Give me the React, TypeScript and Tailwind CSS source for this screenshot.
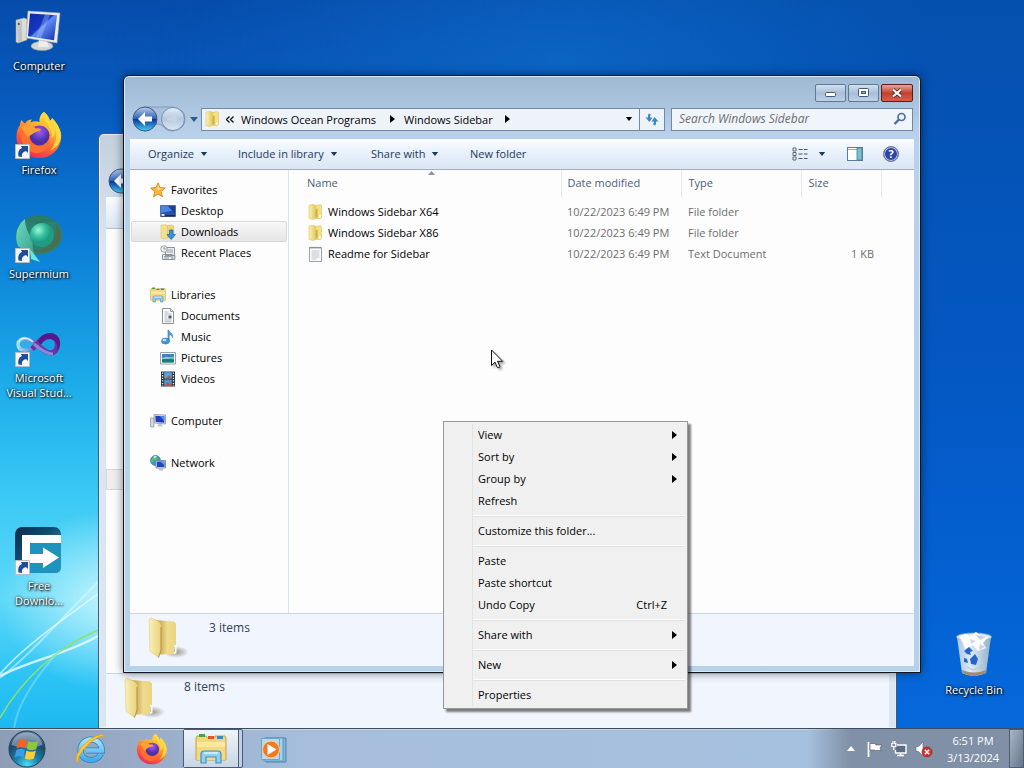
import React from 'react';
import clsx from 'clsx';

type IconProps = { className?: string };

/* ---------- Small glyphs ---------- */

const CaretDown: React.FC<IconProps> = ({ className = 'w-[8px] h-[5px]' }) => (
  <svg viewBox="0 0 8 5" className={clsx('shrink-0', className)} fill="currentColor">
    <path d="M0 0h8L4 5z" />
  </svg>
);

const CaretRight: React.FC<IconProps> = ({ className = 'w-[5px] h-[8px]' }) => (
  <svg viewBox="0 0 5 8" className={clsx('shrink-0', className)} fill="currentColor">
    <path d="M0 0v8l5-4z" />
  </svg>
);

const FolderSmall: React.FC<IconProps> = ({ className = 'w-4 h-4' }) => (
  <svg viewBox="0 0 16 16" className={clsx('shrink-0', className)}>
    <defs>
      <linearGradient id="fs1" x1="0" x2="1">
        <stop offset="0" stopColor="#fbf2b4" />
        <stop offset="1" stopColor="#e2ca60" />
      </linearGradient>
    </defs>
    <path d="M8 1.500l5.500-.8 1 .8v12l-1 1H8z" fill="#f3e184" stroke="#d9c068" strokeWidth=".6" />
    <path d="M2 1L7 .5l1.500 1v12l-1.800 2.200L2 14.500z" fill="url(#fs1)" stroke="#dcc46a" strokeWidth=".6" />
    <path d="M8.600 5.500l2-1v9h-2z" fill="#cfae42" />
    <path d="M12 11h1.800v2.800H12z" fill="#fffbe8" />
  </svg>
);

const FolderLarge: React.FC<IconProps> = ({ className = 'w-12 h-12' }) => (
  <svg viewBox="0 0 48 48" className={clsx('shrink-0', className)}>
    <defs>
      <linearGradient id="fl1" x1="0" x2="1">
        <stop offset="0" stopColor="#fbf0b6" />
        <stop offset="1" stopColor="#e8d27e" />
      </linearGradient>
      <linearGradient id="fl2" x1="0" x2="1">
        <stop offset=".2" stopColor="#c2a352" />
        <stop offset=".6" stopColor="#efdc8c" />
        <stop offset="1" stopColor="#e9d483" />
      </linearGradient>
      <radialGradient id="fl3">
        <stop offset="0" stopColor="#6c6350" stopOpacity=".65" />
        <stop offset="1" stopColor="#6c6350" stopOpacity="0" />
      </radialGradient>
    </defs>
    <ellipse cx="32" cy="35" rx="13" ry="6" fill="url(#fl3)" />
    <path d="M10 3l20 1.500 2 2v28l-2 2.500-14 .5z" fill="url(#fl2)" />
    <path d="M5 2.500l2.500-1.500 8 4L17 8v25l-2.500 7.500L6 34z" fill="url(#fl1)" stroke="#dcc26c" strokeWidth=".5" />
    <path d="M17 10v23l-2.500 7.500" fill="none" stroke="#a88a3a" strokeWidth=".8" />
    <path d="M30 28h2.500v8L30 37z" fill="#fffdf2" />
    <path d="M30.500 30v5" stroke="#88a8c8" strokeWidth=".6" />
  </svg>
);

const TextFile: React.FC<IconProps> = ({ className = 'w-4 h-4' }) => (
  <svg viewBox="0 0 16 16" className={clsx('shrink-0', className)}>
    <path d="M2.500 1.500h12v14h-12z" fill="#fbfcfc" stroke="#8f9799" strokeWidth=".9" />
    <path d="M3 .8v2M5 .8v2M7 .8v2M9 .8v2M11 .8v2M13 .8v2" stroke="#6f7779" strokeWidth=".8" />
    <path d="M4.500 5h8M4.500 7h8M4.500 9h8M4.500 11h8M4.500 13h5" stroke="#a9b4b8" strokeWidth=".8" />
  </svg>
);

/* ---------- Navigation pane icons ---------- */

const StarIcon = () => (
  <svg viewBox="0 0 16 16" className="w-4 h-4 shrink-0">
    <path d="M8 .8l2 4.800 5.200.500-4 3.500 1.300 5.200L8 12l-4.500 2.800 1.200-5.200-4-3.500L6 5.600z" fill="#fbb63c" stroke="#d98419" strokeWidth=".9" />
    <path d="M8 2.800l1.300 3.500 3.400.4-5.200 1.500z" fill="#ffe7a6" />
  </svg>
);

const DesktopIcon = () => (
  <svg viewBox="0 0 16 16" className="w-4 h-4 shrink-0">
    <path d="M.5 2.500h15v11H.5z" fill="#2454b4" stroke="#5d6f86" />
    <path d="M1 3h14v4L1 10z" fill="#4a86e0" />
    <path d="M8 3h7v8z" fill="#1c3f98" />
    <path d="M1 12h14v1.500H1z" fill="#21303f" />
    <path d="M1.500 11h3v2h-3z" fill="#cfe8ff" />
  </svg>
);

const DownloadsIcon = () => (
  <svg viewBox="0 0 16 16" className="w-4 h-4 shrink-0">
    <path d="M7 1.500L12 1l1.500.8v11.700L7 14z" fill="#ecd67a" stroke="#cfb45c" strokeWidth=".5" />
    <path d="M1 1l5-.3L7.500 2v11.500L6 15l-5-1z" fill="#f3df8e" stroke="#d3b860" strokeWidth=".5" />
    <path d="M9.500 6h3.500v4.500h2.500L11.200 15.500 7 10.500h2.500z" fill="#2f93e0" stroke="#1a62a6" strokeWidth=".7" />
  </svg>
);

const RecentIcon = () => (
  <svg viewBox="0 0 16 16" className="w-4 h-4 shrink-0">
    <path d="M5.500 2.500h9v8h-9zM2.500 9.500h10v5h-10z" fill="#eceff1" stroke="#7f8a90" strokeWidth=".9" />
    <path d="M7 5h6M7 7h6M4 11.500h7M4 13h5" stroke="#8d989e" strokeWidth=".9" />
    <path d="M12 10.500h3v4h-3z" fill="#c8d0d4" stroke="#7f8a90" strokeWidth=".8" />
    <circle cx="4" cy="4" r="3.200" fill="#f4f6f7" stroke="#8a959b" strokeWidth=".9" />
    <path d="M4 2.200V4h1.600" stroke="#55606a" strokeWidth=".8" fill="none" />
  </svg>
);

const LibrariesIcon: React.FC<IconProps> = ({ className = 'w-4 h-4' }) => (
  <svg viewBox="0 0 32 32" className={clsx('shrink-0', className)}>
    <path d="M1 5l1-2h9l1.500 2H20V3h10l1 2v22H1z" fill="#f0d77c" stroke="#c8a247" />
    <path d="M4 1h6v3H4z" fill="#3ea93c" />
    <path d="M13 3h6v3h-6z" fill="#e0542e" />
    <path d="M22 3h6v3h-6z" fill="#3488d4" />
    <path d="M2 9h28v18H2z" fill="#fae99c" />
    <path d="M2 14h28v13H2z" fill="#f3da80" />
    <path d="M6 30V21q0-3 3-3h14q3 0 3 3v9h-5v-6H11v6z" fill="#8fd0f2" stroke="#4492c4" strokeWidth="1.200" />
    <path d="M9 20h14" stroke="#dff5ff" strokeWidth="1.500" />
  </svg>
);

const DocumentsIcon = () => (
  <svg viewBox="0 0 16 16" className="w-4 h-4 shrink-0">
    <path d="M2.500.5h8l3 3v12h-11z" fill="#fdfdfd" stroke="#7d878c" strokeWidth=".9" />
    <path d="M10.500.5v3h3" fill="#dfe4e7" stroke="#7d878c" strokeWidth=".8" />
    <path d="M4.500 4h4M4.500 6h7M4.500 8h3M4.500 10h3M4.500 12h7M4.500 13.700h7" stroke="#9aa5ab" strokeWidth=".8" />
    <path d="M8.500 7.500h3v3h-3z" fill="#4b5a66" />
  </svg>
);

const MusicIcon = () => (
  <svg viewBox="0 0 16 16" className="w-4 h-4 shrink-0">
    <path d="M8 .8c1 2.700 5.500 3.200 4.500 8.200 0-2.500-2-3.300-3.300-3.500v6.500H8z" fill="#4ea0e0" stroke="#2f7cc0" strokeWidth=".6" />
    <ellipse cx="5.500" cy="12" rx="4" ry="3" fill="#3f95de" stroke="#2a70b4" strokeWidth=".6" />
    <ellipse cx="4.500" cy="11" rx="2" ry="1.200" fill="#b9e2fb" />
  </svg>
);

const PicturesIcon = () => (
  <svg viewBox="0 0 16 16" className="w-4 h-4 shrink-0">
    <path d="M.5 2.500h15v11.500H.5z" fill="#fbfdfd" stroke="#8a979e" strokeWidth=".9" />
    <path d="M2 4h12v8.500H2z" fill="#5fc0d6" />
    <path d="M2 4h12v2.500L2 8z" fill="#3c86ba" />
    <path d="M2 9.500q5-2 12 0v3H2z" fill="#1d7a72" />
    <path d="M2 8.500q4-2 9 0z" fill="#d8f4f4" />
  </svg>
);

const VideosIcon = () => (
  <svg viewBox="0 0 16 16" className="w-4 h-4 shrink-0">
    <path d="M1 .5h14v15H1z" fill="#2b333b" />
    <path d="M4.200 1.200h7.600v6.300H4.200z" fill="#56a4dc" />
    <path d="M4.200 8.500h7.600v6.300H4.200z" fill="#4a96d2" />
    <path d="M6 7.500l3-3.500 2.800 3.500zM5 14.800l2-3.800 3 2 1.800-2v3.800z" fill="#b4574a" />
    <path d="M2.600 1.500v13.500M13.400 1.500v13.500" stroke="#e8eef2" strokeWidth="1.300" strokeDasharray="1.300 1.300" />
  </svg>
);

const ComputerSmall = () => (
  <svg viewBox="0 0 16 16" className="w-4 h-4 shrink-0">
    <path d="M.5 5h3.500v9H.5z" fill="#d5d9de" stroke="#8d949c" strokeWidth=".7" />
    <path d="M4 1.500l11.500.5v9L4.500 10z" fill="#e4e6ea" stroke="#8d949c" strokeWidth=".8" />
    <path d="M5.300 2.800l9 .4v6.600l-8.600-.8z" fill="#1c3fc0" />
    <path d="M10 3l4.300.2v5z" fill="#5c86e8" />
    <path d="M8.500 11h3l1.500 2.500H7z" fill="#c2c8d0" />
  </svg>
);

const NetworkSmall = () => (
  <svg viewBox="0 0 16 16" className="w-4 h-4 shrink-0">
    <circle cx="5.500" cy="5.500" r="5" fill="#3a9cc8" stroke="#27708f" strokeWidth=".6" />
    <path d="M2 3q3-3 6 0-1 2-3 2t-3 3Q.6 5.500 2 3z" fill="#5cbf6a" />
    <path d="M3 2q2-1.500 4-.5L5 3z" fill="#e2f6f4" />
    <path d="M6 5.500h9.500v7.500H6z" fill="#dfe4ea" stroke="#6f7c8c" strokeWidth=".8" />
    <path d="M7 6.500h7.500V12H7z" fill="#1d48c4" />
    <path d="M10 6.500h4.500V10z" fill="#6a98ee" />
    <path d="M9 13.500h4v2H9z" fill="#b4bcc6" />
  </svg>
);

/* ---------- Desktop icons ---------- */

const ShortcutArrow = () => (
  <g>
    <path d="M.5 33.500h14v14H.5z" fill="#f6f8fa" stroke="#b4bcc6" />
    <path d="M3.500 45.500c-1-5 1-7.500 3.500-8.500l-1-2h7v7l-2-2c-3 1-4.500 2.500-4 6z" fill="#1f4c9c" />
  </g>
);

const ComputerLarge = () => (
  <svg viewBox="0 0 48 48" className="w-12 h-12">
    <defs>
      <linearGradient id="cl1" x1="0" y1="0" x2="1" y2="1">
        <stop offset="0" stopColor="#0a2ba0" />
        <stop offset=".45" stopColor="#1636c4" />
        <stop offset=".5" stopColor="#5f8cf2" />
        <stop offset="1" stopColor="#0f2cae" />
      </linearGradient>
    </defs>
    <path d="M1 13l8-2 3 1v21l-9 3-2-1z" fill="#dcdcd8" stroke="#9a9a98" strokeWidth=".6" />
    <path d="M2 14l5-1v21l-4 1z" fill="#c2c4c4" />
    <circle cx="3.800" cy="17" r="1" fill="#444" />
    <ellipse cx="27" cy="39" rx="11" ry="4.500" fill="#d4d6d6" stroke="#9ea2a4" strokeWidth=".6" />
    <path d="M24 32l8 2 2 6H23z" fill="#eceeee" />
    <path d="M13 4l32 2-3 30-31-5z" fill="#ecebe6" stroke="#a9a9a4" strokeWidth=".6" />
    <path d="M15 6.500l27 1.800-3 25-26-4z" fill="url(#cl1)" />
    <path d="M30 7.500l5 .4-9 23-5-.8z" fill="#b7d0fb" opacity=".35" />
  </svg>
);

const FirefoxArt = () => (
  <g>
    <defs>
      <linearGradient id="ff1" x1=".8" y1="0" x2=".3" y2="1">
        <stop offset="0" stopColor="#fff04a" />
        <stop offset=".35" stopColor="#ffb22e" />
        <stop offset=".7" stopColor="#ff5a36" />
        <stop offset="1" stopColor="#e8286a" />
      </linearGradient>
      <radialGradient id="ff2" cx=".5" cy=".3">
        <stop offset="0" stopColor="#a25cf0" />
        <stop offset="1" stopColor="#4a2fa8" />
      </radialGradient>
    </defs>
    <path d="M29 1c4 3 5 6 6 9 1-1 2-2 2-3 6 6 9.500 13 9 20-1 12-10 20-22 20C10 47 1.500 37 1.500 26c0-5 1-9 3.500-12 0-2 .5-3 1.500-5 1.500 2 2.500 3 3.500 3.500 1.500-2.500 4-4 7-4-1 1-1.500 2-1.500 3 3-1.500 6-1.500 9-.5C24 7 25.500 3 29 1z" fill="url(#ff1)" />
    <path d="M6 15c4-2 8-1 11 1 2-1 5-1 7 .5-2 3-4 3.500-7 5-2 1-3 3-3 5 1 6 6 9 11 8 5-1 8-4 9-8 2 8-3 15-11 15.500C12 42.500 4 33 6 15z" fill="#ff6f2e" />
    <circle cx="24.500" cy="24.500" r="10" fill="url(#ff2)" />
    <path d="M29 1c-2 9 9 14 8 26 3-3 4-8 3-12 3 9 1 19-5 25 8-4 12-11 11-17-1-6-4-11-9-16 0 1-1 2-2 3-1-3-2-6-6-9z" fill="#ffd83e" />
    <path d="M6 16c5-4 11-2 15 1.500 3-.5 4.500.5 5 1.500-3 2-6 1.500-8 3.500-2 2-5 2-5 5z" fill="#ffa034" />
  </g>
);

const FirefoxLarge = () => (
  <svg viewBox="0 0 48 48" className="w-12 h-12">
    <FirefoxArt />
    <ShortcutArrow />
  </svg>
);

const SupermiumIcon = () => (
  <svg viewBox="0 0 48 48" className="w-12 h-12">
    <defs>
      <radialGradient id="sm1" cx=".35" cy=".3">
        <stop offset="0" stopColor="#9ff4d6" />
        <stop offset=".6" stopColor="#35bf9d" />
        <stop offset="1" stopColor="#1f9c84" />
      </radialGradient>
      <linearGradient id="sm2" x1="0" y1="0" x2="1" y2="1">
        <stop offset="0" stopColor="#6fdcc4" />
        <stop offset="1" stopColor="#2f9684" />
      </linearGradient>
    </defs>
    <ellipse cx="24" cy="20" rx="23.500" ry="19.500" fill="#2c8070" />
    <path d="M10 4C2 10-1 21 3 31l19 14c-4-8-5-14-4-20C13 19 10 11 10 4z" fill="url(#sm2)" />
    <path d="M10 4c8-6 24-5 31 3-8-1-14 0-18 3-5-1-9-3-13-6z" fill="#2a7a68" />
    <path d="M41 9c8 8 6 20-5 26-8 4-15 3-18 0 12 1 22-6 23-26z" fill="#4a6e52" />
    <circle cx="27" cy="20" r="12" fill="url(#sm1)" />
    <path d="M15 34l10 13-9-3z" fill="#6ee6d6" />
    <ShortcutArrow />
  </svg>
);

const VisualStudioIcon = () => (
  <svg viewBox="0 0 48 48" className="w-12 h-12">
    <defs>
      <linearGradient id="vs1" x1="0" x2="1">
        <stop offset="0" stopColor="#a5e0f6" />
        <stop offset=".6" stopColor="#6f9bd8" />
        <stop offset="1" stopColor="#6a5cba" />
      </linearGradient>
    </defs>
    <path d="M22 27C17 18 4 17 3 25c0 8 11 8 19 1" fill="#56b8ea" fillOpacity=".5" stroke="url(#vs1)" strokeWidth="3.500" />
    <path d="M4 23c2-5 9-5 14 0" fill="none" stroke="#d8f3fc" strokeWidth="1.500" />
    <path d="M17 30C24 24 27 16 35 17c9 1 9 12 4 16-5 3-11-2-18-8" fill="none" stroke="#6f2fa4" strokeWidth="5" />
    <path d="M23 22c3-5 7-8 13-8 9 1 12 11 6 18 1-8-1-11-7-12-5 0-7 3-9 6z" fill="#5a168c" />
    <path d="M19 25c7 6 13 10 19 10" fill="none" stroke="#8f86d8" strokeWidth="3" />
    <ShortcutArrow />
  </svg>
);

const DownloadManagerIcon = () => (
  <svg viewBox="0 0 48 48" className="w-12 h-12">
    <defs>
      <linearGradient id="dm1" x1="0" y1="0" x2="1" y2="1">
        <stop offset="0" stopColor="#0c2c4a" />
        <stop offset=".4" stopColor="#0f4a70" />
        <stop offset="1" stopColor="#2eb6dc" />
      </linearGradient>
    </defs>
    <rect x="0" y="0" width="46" height="46" rx="7" fill="url(#dm1)" />
    <path d="M15 16h31v24q0 6-6 6H15z" fill="#1d93bd" />
    <path d="M7 8h39v8H15v11h13v-6.500l16 10-16 10.500v-5H7z" fill="#fff" />
    <ShortcutArrow />
  </svg>
);

const RecycleBinIcon = () => (
  <svg viewBox="0 0 48 48" className="w-12 h-12">
    <defs>
      <linearGradient id="rb1" x1="0" x2="1">
        <stop offset="0" stopColor="#b9cede" />
        <stop offset=".4" stopColor="#f0f6fa" />
        <stop offset="1" stopColor="#9fb6c8" />
      </linearGradient>
    </defs>
    <path d="M7 6l5 36q12 6 24 0l5-36z" fill="url(#rb1)" fillOpacity=".92" />
    <path d="M12 39q12 5 24 0l-.5 3q-11 6-23 0z" fill="#a08c74" />
    <ellipse cx="24" cy="6" rx="17.500" ry="4" fill="#dbe6ee" stroke="#8fa6b8" strokeWidth=".8" />
    <path d="M9 6l6-3 5 2 6-4 5 4 7 1-5 6 3 5-8 3-5-6-8 4-2-6z" fill="#fbfdfe" />
    <path d="M26 4l10 2-6 3zM30 13l5 3-6 3z" fill="#c8d2da" />
    <path d="M20 8l6 2-5 3z" fill="#d3dce4" />
    <path d="M14 20l5-4 4 4-3 1 1 3-4-1zM20 28l5-5 3 5-2 6-5-1zM14 27l3 1 1 4-4-1z" fill="#2864cc" />
    <path d="M32 22l2 10-4 6M17 36l6 3 8-3" stroke="#b4c4d0" fill="none" />
  </svg>
);

/* ---------- Taskbar icons ---------- */

const StartOrb = () => (
  <svg viewBox="0 0 38 38" className="w-[38px] h-[38px]">
    <defs>
      <radialGradient id="so1" cx=".5" cy=".95" r=".9">
        <stop offset="0" stopColor="#4fe0f4" />
        <stop offset=".35" stopColor="#1c84b0" />
        <stop offset=".75" stopColor="#1c4668" />
        <stop offset="1" stopColor="#5d7f9c" />
      </radialGradient>
    </defs>
    <circle cx="19" cy="19" r="18" fill="url(#so1)" stroke="#23415c" />
    <path d="M3.500 15C5 7 12 2.500 19 2.500S33 7 34.500 15q-15 6-31 0z" fill="#fff" opacity=".35" />
    <path d="M10.500 10.500q4-2.500 8.500 0l-1.700 8q-4.300-2.500-8.800 0z" fill="#f0622a" />
    <path d="M20.500 11q4.500 2.500 9.500 0l-1.700 8q-5 2.500-9.500 0z" fill="#8cc83c" />
    <path d="M8.300 20q4.500-2.500 8.700 0l-1.700 7.500q-4-2.500-8.700 0z" fill="#3c9ce8" />
    <path d="M18.500 20.500q4.500 2.500 9.300 0l-1.800 8q-5 2.300-9.200 0z" fill="#fbd036" />
  </svg>
);

const ExplorerE = () => (
  <svg viewBox="0 0 32 32" className="w-8 h-8">
    <defs>
      <linearGradient id="ie1" x1="0" y1="0" x2="0" y2="1">
        <stop offset="0" stopColor="#a2e4fb" />
        <stop offset="1" stopColor="#43abe6" />
      </linearGradient>
    </defs>
    <path d="M27 21c-2 4-6 6-10 6-6.500 0-10.500-4.500-10.500-10S11 6.500 17 6.500s11 4.500 11 11H12" fill="none" stroke="#2b80be" strokeWidth="6" />
    <path d="M27 21c-2 4-6 6-10 6-6.500 0-10.500-4.500-10.500-10S11 6.500 17 6.500s11 4.500 11 11H12" fill="none" stroke="url(#ie1)" strokeWidth="4.500" />
    <path d="M4 30C-1 27 5 15 14 8S30 0 30 4c-1-2-7 0-14 6S3 24 4 30z" fill="#fbc93a" stroke="#dc9c1c" strokeWidth=".7" />
  </svg>
);

const MediaPlayerIcon = () => (
  <svg viewBox="0 0 32 32" className="w-8 h-8">
    <path d="M8 5h20v24H8z" fill="#7fb4d4" stroke="#4c86ac" />
    <path d="M6 5h19v23H6z" fill="#a6d2ea" stroke="#5b98bc" />
    <path d="M3.500 5.500h18v21h-18z" fill="#b9d8ec" stroke="#6ba6c8" />
    <circle cx="13" cy="16.500" r="8.500" fill="#f27a1e" stroke="#fbd2a6" strokeWidth="1" />
    <path d="M9.500 11v11l9-5.500z" fill="#fff" />
  </svg>
);

const FlagIcon = () => (
  <svg viewBox="0 0 16 16" className="w-4 h-4">
    <path d="M1.500 1v15" stroke="#fff" strokeWidth="1.800" />
    <path d="M3 2.500h5l1 1.500h6l-2 3 1 2.500H8.500L7.500 9H3z" fill="#fff" stroke="#45556a" strokeWidth=".6" />
  </svg>
);

const NetworkTray = () => (
  <svg viewBox="0 0 16 16" className="w-4 h-4">
    <path d="M6 4h9v8H4.500V9" fill="#5d6c80" stroke="#fff" strokeWidth="1.400" />
    <path d="M6 14.500h7M9.500 12v2.500" stroke="#fff" strokeWidth="1.400" />
    <path d="M.8 2v3.500h4V2M2 0v3M3.800 0v3M2.800 5.500V9" stroke="#fff" strokeWidth="1.200" fill="none" />
  </svg>
);

const VolumeTray = () => (
  <svg viewBox="0 0 18 16" className="w-[18px] h-4">
    <path d="M1 5.500h2.500L8 1v14l-4.500-4.500H1z" fill="#fff" stroke="#55657a" strokeWidth=".6" />
    <circle cx="12" cy="11" r="5" fill="#d32f28" stroke="#8e1e1a" strokeWidth=".6" />
    <path d="M9.800 8.800l4.400 4.400M14.200 8.800l-4.400 4.400" stroke="#fff" strokeWidth="1.600" />
  </svg>
);

/* ---------- Desktop ---------- */

const Wallpaper = () => (
  <svg viewBox="0 0 1024 768" preserveAspectRatio="none" className="absolute inset-0 w-full h-full">
    <defs>
      <linearGradient id="wp1" x1="0" y1="0" x2="0" y2="1">
        <stop offset="0" stopColor="#0450ae" />
        <stop offset=".5" stopColor="#0458c4" />
        <stop offset="1" stopColor="#046ade" />
      </linearGradient>
      <linearGradient id="wp2" x1="0" y1="0" x2="0" y2="1">
        <stop offset="0" stopColor="#064cab" />
        <stop offset=".15" stopColor="#085cbe" />
        <stop offset=".3" stopColor="#0a7ad4" />
        <stop offset=".5" stopColor="#1cace9" />
        <stop offset=".65" stopColor="#3bcaf5" />
        <stop offset=".78" stopColor="#5ed8f8" />
        <stop offset=".88" stopColor="#2cc4f5" />
        <stop offset="1" stopColor="#12b0ee" />
      </linearGradient>
      <linearGradient id="wp3" x1="0" x2="1">
        <stop offset="0" stopColor="#fff" />
        <stop offset=".1" stopColor="#fff" />
        <stop offset=".8" stopColor="#000" />
      </linearGradient>
      <mask id="wp4">
        <path d="M0 0h1024v768H0z" fill="url(#wp3)" />
      </mask>
      <radialGradient id="wp5">
        <stop offset="0" stopColor="#1478d6" stopOpacity=".45" />
        <stop offset="1" stopColor="#1478d6" stopOpacity="0" />
      </radialGradient>
      <radialGradient id="wp6">
        <stop offset="0" stopColor="#d9fbff" stopOpacity=".8" />
        <stop offset="1" stopColor="#d9fbff" stopOpacity="0" />
      </radialGradient>
    </defs>
    <path d="M0 0h1024v768H0z" fill="url(#wp1)" />
    <path d="M0 0h1024v768H0z" fill="url(#wp2)" mask="url(#wp4)" />
    <ellipse cx="560" cy="60" rx="380" ry="160" fill="url(#wp5)" />
    <ellipse cx="110" cy="600" rx="110" ry="90" fill="url(#wp6)" />
    <g fill="none">
      <path d="M0 678C30 655 60 620 98 582" stroke="#e4fbff" strokeWidth="2" opacity=".5" />
      <path d="M0 674C20 650 55 625 98 594" stroke="#effdff" strokeWidth="1.500" opacity=".7" />
      <path d="M0 676C30 660 65 655 98 636" stroke="#effdff" strokeWidth="2.500" opacity=".8" />
      <path d="M0 718C20 682 55 648 98 630" stroke="#8fe070" strokeWidth="1.500" />
      <path d="M14 728C18 700 40 672 60 650" stroke="#a5ecff" strokeWidth="2" opacity=".4" />
    </g>
  </svg>
);

const DesktopItem: React.FC<{ icon: React.ReactNode; lines: string[]; className?: string }> = ({ icon, lines, className }) => (
  <button type="button" className={clsx('flex flex-col items-center h-[104px] pt-[7px]', className)}>
    {icon}
    <span className="mt-[3px] flex flex-col leading-[15px] text-white whitespace-nowrap [text-shadow:1px_1px_2px_#000,0_0_3px_#000]">
      {lines.map(line => (
        <span key={line}>{line}</span>
      ))}
    </span>
  </button>
);

/* ---------- Explorer window ---------- */

const navGroups = [
  {
    title: 'Favorites',
    icon: <StarIcon />,
    items: [
      { label: 'Desktop', icon: <DesktopIcon /> },
      { label: 'Downloads', icon: <DownloadsIcon />, selected: true },
      { label: 'Recent Places', icon: <RecentIcon /> },
    ],
  },
  {
    title: 'Libraries',
    icon: <LibrariesIcon />,
    items: [
      { label: 'Documents', icon: <DocumentsIcon /> },
      { label: 'Music', icon: <MusicIcon /> },
      { label: 'Pictures', icon: <PicturesIcon /> },
      { label: 'Videos', icon: <VideosIcon /> },
    ],
  },
  { title: 'Computer', icon: <ComputerSmall />, items: [] },
  { title: 'Network', icon: <NetworkSmall />, items: [] },
];

const files = [
  { name: 'Windows Sidebar X64', icon: <FolderSmall />, date: '10/22/2023 6:49 PM', type: 'File folder', size: '' },
  { name: 'Windows Sidebar X86', icon: <FolderSmall />, date: '10/22/2023 6:49 PM', type: 'File folder', size: '' },
  { name: 'Readme for Sidebar', icon: <TextFile />, date: '10/22/2023 6:49 PM', type: 'Text Document', size: '1 KB' },
];

const BackForward = () => (
  <svg viewBox="0 0 56 28" className="w-14 h-7 shrink-0">
    <defs>
      <linearGradient id="bf1" x1="0" y1="0" x2="0" y2="1">
        <stop offset="0" stopColor="#b8cfec" />
        <stop offset=".48" stopColor="#2f62b6" />
        <stop offset=".52" stopColor="#0a3698" />
        <stop offset="1" stopColor="#45d0f6" />
      </linearGradient>
      <linearGradient id="bf2" x1="0" y1="0" x2="0" y2="1">
        <stop offset="0" stopColor="#e3edf8" />
        <stop offset=".5" stopColor="#b4c8de" />
        <stop offset="1" stopColor="#d9e8f6" />
      </linearGradient>
    </defs>
    <path d="M13 2h29q12 2 12 12t-12 12q-7 0-10-5-5-4-10 0-3 5-9 5" fill="#a9c0dc" stroke="#8299b8" />
    <circle cx="14" cy="14" r="12" fill="url(#bf1)" stroke="#3d5a86" />
    <path d="M14 7l-7 7 7 7v-4.500h7v-5h-7z" fill="#fff" />
    <circle cx="42" cy="14" r="11.500" fill="url(#bf2)" stroke="#788eac" />
    <path d="M42 9.500l5 4.500-5 4.500v-3h-6v-3h6z" fill="#c6d5e6" />
  </svg>
);

const CaptionButtons = () => (
  <div className="flex justify-end gap-[2px] h-[18px] pr-px">
    <button type="button" aria-label="Minimize" className="w-[31px] flex items-center justify-center rounded-xs border border-[#5f7896] bg-linear-to-b from-[#d3e1f0] via-[#a9bfd9] to-[#bcd2ea]">
      <svg viewBox="0 0 12 6" className="w-3 h-[6px] mt-1">
        <rect x=".5" y=".5" width="10" height="4" rx="1" fill="#fff" stroke="#46586e" />
      </svg>
    </button>
    <button type="button" aria-label="Maximize" className="w-[31px] flex items-center justify-center rounded-xs border border-[#5f7896] bg-linear-to-b from-[#d3e1f0] via-[#a9bfd9] to-[#bcd2ea]">
      <svg viewBox="0 0 12 10" className="w-3 h-[10px]">
        <rect x=".5" y=".5" width="10" height="8" rx="1" fill="#fff" stroke="#46586e" />
        <rect x="3.500" y="3.500" width="4" height="2" fill="#9ab0ca" stroke="#46586e" />
      </svg>
    </button>
    <button type="button" aria-label="Close" className="w-[32px] flex items-center justify-center rounded-xs border border-[#5a1a18] bg-linear-to-b from-[#e6a596] via-[#c2402c] to-[#d8604a]">
      <svg viewBox="0 0 12 10" className="w-3 h-[10px]">
        <path d="M2 1.500l8 7M10 1.500l-8 7" stroke="#5c2a28" strokeWidth="3.800" />
        <path d="M2 1.500l8 7M10 1.500l-8 7" stroke="#fff" strokeWidth="2.200" />
      </svg>
    </button>
  </div>
);

const AddressRow = () => (
  <div className="flex items-center h-7 mt-[3px] pl-px">
    <BackForward />
    <button type="button" aria-label="Recent pages" className="w-[14px] flex justify-center text-[#2c5d88]">
      <CaretDown className="w-[8px] h-[5px]" />
    </button>
    <div className="flex flex-1 h-[23px] items-center border border-[#7089a8] bg-[#eef3fa] text-black">
      <FolderSmall className="w-4 h-4 ml-[2px]" />
      <svg viewBox="0 0 8 7" className="w-2 h-[7px] ml-[6px] mr-[7px]" fill="none" stroke="#111" strokeWidth="1.300">
        <path d="M3.500.5l-3 3 3 3M7.500.5l-3 3 3 3" />
      </svg>
      <button type="button" className="w-[149px] text-left whitespace-nowrap">Windows Ocean Programs</button>
      <CaretRight />
      <button type="button" className="w-[101px] ml-[9px] text-left whitespace-nowrap">Windows Sidebar</button>
      <CaretRight />
      <button type="button" aria-label="Previous locations" className="ml-auto px-[6px]">
        <CaretDown className="w-[8px] h-[4px]" />
      </button>
      <button type="button" aria-label="Refresh" className="w-[25px] h-full flex items-center justify-center border-l border-[#7089a8]">
        <svg viewBox="0 0 14 14" className="w-[14px] h-[14px]" fill="#3a86c4">
          <path d="M4 1.500q-1.500 1.500-1 4H.5L4.500 10l3-4.500H5q0-2 1-3z" />
          <path d="M10 12.500q1.500-1.500 1-4h2.500L9.500 4l-3 4.500H9q0 2-1 3z" transform="translate(0 1)" />
        </svg>
      </button>
    </div>
    <label className="ml-[6px] mr-px w-[242px] h-[23px] flex items-center border border-[#7089a8] bg-[#f0f4fb] px-[7px]">
      <input
        type="text"
        aria-label="Search Windows Sidebar"
        placeholder="Search Windows Sidebar"
        className="flex-1 min-w-0 text-xs italic bg-transparent outline-none placeholder:text-[#6d6d6d]"
      />
      <svg viewBox="0 0 14 14" className="w-[14px] h-[14px] -mr-[2px]" fill="none" stroke="#4a6f9c">
        <circle cx="8.500" cy="5" r="3.500" strokeWidth="1.700" />
        <path d="M6 7.500L1.500 12" strokeWidth="2.400" />
      </svg>
    </label>
  </div>
);

const Toolbar = () => (
  <div className="flex items-center h-[31px] pl-[18px] pr-[15px] pb-px border-b border-[#a0afc3] bg-linear-to-b from-[#fbfdff] via-[#e6effa] to-[#dce6f4] text-[#1e395b]">
    <button type="button" className="w-[90px] flex items-center gap-[6px] whitespace-nowrap">
      Organize <CaretDown className="w-[8px] h-[4px]" />
    </button>
    <button type="button" className="w-[133px] flex items-center gap-[6px] whitespace-nowrap">
      Include in library <CaretDown className="w-[8px] h-[4px]" />
    </button>
    <button type="button" className="w-[99px] flex items-center gap-[6px] whitespace-nowrap">
      Share with <CaretDown className="w-[8px] h-[4px]" />
    </button>
    <button type="button" className="whitespace-nowrap">New folder</button>
    <div className="ml-auto flex items-center">
      <button type="button" aria-label="Change your view">
        <svg viewBox="0 0 16 14" className="w-4 h-[14px]" fill="none" stroke="#44566c">
          <path d="M1 1h3v3H1zM1 5.500h3v3H1zM1 10h3v3H1z" strokeWidth=".9" fill="#fff" />
          <path d="M6.500 2.500h4M6.500 7h4M6.500 11.500h4M12 2.500h3.500M12 7h3.500M12 11.500h3.500" strokeWidth="1" />
        </svg>
      </button>
      <button type="button" aria-label="More options" className="ml-[10px]">
        <CaretDown className="w-[8px] h-[4px]" />
      </button>
      <button type="button" aria-label="Show the preview pane" className="ml-[21px]">
        <svg viewBox="0 0 16 14" className="w-4 h-[14px]">
          <rect x=".5" y=".5" width="15" height="13" fill="#fff" stroke="#5d7a94" />
          <path d="M1 2.500h14" stroke="#7fb6d0" />
          <path d="M10 1h5v12h-5z" fill="#7cc0cc" stroke="#3d7f98" strokeWidth=".8" />
        </svg>
      </button>
      <button
        type="button"
        aria-label="Help"
        className="ml-5 w-4 h-4 flex items-center justify-center rounded-full border border-[#6c7a98] bg-[#2c43a8] ring-1 ring-inset ring-white/70 text-white font-bold leading-none"
      >
        ?
      </button>
    </div>
  </div>
);

const NavPane = () => (
  <nav className="w-[159px] shrink-0 border-r border-[#d9e3f0] pt-[9px] px-px text-black">
    {navGroups.map(group => (
      <div key={group.title} className="mb-[21px]">
        <a href="#" className="h-[21px] flex items-center gap-[5px] pl-[19px]">
          {group.icon}
          {group.title}
        </a>
        {group.items.map(item => (
          <a
            key={item.label}
            href="#"
            className={clsx(
              'h-[21px] flex items-center gap-[5px] pl-[28px] border rounded-xs',
              'selected' in item && item.selected ? 'border-[#d9d9d9] bg-linear-to-b from-[#f8f8f8] to-[#e5e5e5]' : 'border-transparent'
            )}
          >
            {item.icon}
            {item.label}
          </a>
        ))}
      </div>
    ))}
  </nav>
);

const FileTable = () => (
  <div className="flex-1 relative">
    <table className="w-full table-fixed border-collapse text-left text-[#6d6d6d] whitespace-nowrap">
      <colgroup>
        <col className="w-[272px]" />
        <col className="w-[120px]" />
        <col className="w-[120px]" />
        <col className="w-[80px]" />
        <col />
      </colgroup>
      <thead>
        <tr className="h-[27px] text-[#4c607a]">
          <th className="font-normal p-0 pb-[2px] pl-[18px] border-r border-[#e3e8ee]">Name</th>
          <th className="font-normal p-0 pb-[2px] pl-[6px] border-r border-[#e3e8ee]">Date modified</th>
          <th className="font-normal p-0 pb-[2px] pl-[7px] border-r border-[#e3e8ee]">Type</th>
          <th className="font-normal p-0 pb-[2px] pl-[7px] border-r border-[#e3e8ee]">Size</th>
          <th />
        </tr>
      </thead>
      <tbody>
        <tr className="h-[4px]" />
        {files.map(file => (
          <tr key={file.name} className="h-[21px]">
            <td className="p-0 pl-[18px] text-black">
              <span className="flex items-center gap-[5px]">
                {file.icon}
                {file.name}
              </span>
            </td>
            <td className="p-0 pl-[6px]">{file.date}</td>
            <td className="p-0 pl-[7px]">{file.type}</td>
            <td className="p-0 pr-[7px] text-right">{file.size}</td>
            <td />
          </tr>
        ))}
      </tbody>
    </table>
    {/* sort marker */}
    <svg viewBox="0 0 7 4" className="absolute left-[139px] top-px w-[7px] h-1" fill="#8296a8">
      <path d="M0 4h7L3.500 0z" />
    </svg>
  </div>
);

const ExplorerWindow = () => (
  <section className="absolute left-[123px] right-[103px] top-[75px] bottom-[55px] flex flex-col rounded-t-md border border-[#10161d] bg-[#b9d1ea] bg-linear-to-b from-[#9fb9d3] via-[#b9d1ea] via-10% to-[#b5d2ea] px-[6px] pb-[6px] shadow-[inset_0_0_0_1px_#dceaf6,0_0_10px_rgba(0,0,0,0.5)]">
    <header className="h-[63px] shrink-0 pt-[8px]">
      <CaptionButtons />
      <AddressRow />
    </header>
    <Toolbar />
    <div className="flex flex-1 min-h-0 bg-[#fdfdfe]">
      <NavPane />
      <FileTable />
    </div>
    <footer className="h-[53px] shrink-0 flex items-start border-t border-[#ccd6e2] bg-[#f1f5fd] text-xs text-[#2f405a]">
      <FolderLarge className="w-12 h-12 ml-[14px] mt-[3px]" />
      <span className="ml-[17px] mt-[6px] leading-4">3 items</span>
    </footer>
  </section>
);

// Inactive window behind the main one, only its edges stay visible
const BackgroundWindow = () => (
  <section className="absolute left-[98px] right-[127px] top-[133px] bottom-0 flex flex-col rounded-t-md border border-b-0 border-[#46586c] bg-[#d8e4f1] bg-linear-to-b from-[#c3d0de] to-[#dbe6f4] to-20% px-[7px] shadow-[inset_0_0_0_1px_#e6eef8] overflow-hidden">
    <header className="h-[63px] shrink-0 pt-[33px] pl-[1px]">
      <BackForward />
    </header>
    <div className="h-[32px] shrink-0 border-b border-[#b4c2d4] bg-linear-to-b from-[#fbfdff] to-[#dce6f4]" />
    <div className="flex-1 bg-[#fdfdfe] flex flex-col">
      <div className="mt-auto mb-[183px] h-[21px] w-[160px] border border-[#d9d9d9] bg-[#eeeeee]" />
    </div>
    <footer className="h-[55px] shrink-0 flex items-start border-t border-[#ccd6e2] bg-[#f1f5fd] text-xs text-[#2f405a]">
      <FolderLarge className="w-12 h-12 ml-[14px] mt-[3px]" />
      <span className="ml-[16px] mt-[5px] leading-4">8 items</span>
    </footer>
  </section>
);

/* ---------- Context menu ---------- */

type MenuItem = { label: string; submenu?: boolean; shortcut?: string };

const menuGroups: MenuItem[][] = [
  [{ label: 'View', submenu: true }, { label: 'Sort by', submenu: true }, { label: 'Group by', submenu: true }, { label: 'Refresh' }],
  [{ label: 'Customize this folder...' }],
  [{ label: 'Paste' }, { label: 'Paste shortcut' }, { label: 'Undo Copy', shortcut: 'Ctrl+Z' }],
  [{ label: 'Share with', submenu: true }],
  [{ label: 'New', submenu: true }],
  [{ label: 'Properties' }],
];

const ContextMenu = () => (
  <div role="menu" className="absolute left-[443px] top-[421px] w-[245px] border border-[#979797] bg-[#f0f0f0] p-[2px] text-black shadow-[3px_3px_2px_rgba(0,0,0,0.5)]">
    <div className="pl-[26px]">
      <div className="border-l border-[#e2e3e3] divide-y divide-white">
        {menuGroups.map((group, i) => (
          <div key={i} className={clsx('shadow-[inset_0_1px_0_#e0e0e0]', i === 0 ? 'pb-[3px] shadow-none' : i === menuGroups.length - 1 ? 'pt-1' : 'pt-1 pb-[3px]')}>
            {group.map(item => (
              <button key={item.label} type="button" role="menuitem" className="w-full h-[22px] flex items-center justify-between pl-[5px] pr-[8px] pb-px">
                {item.label}
                {item.submenu && <CaretRight className="w-[5px] h-[8px]" />}
                {item.shortcut && <span className="pr-[10px]">{item.shortcut}</span>}
              </button>
            ))}
          </div>
        ))}
      </div>
    </div>
  </div>
);

/* ---------- Taskbar ---------- */

const Taskbar = () => (
  <footer className="relative h-10 shrink-0 flex items-stretch border-t border-[#3c4c60] bg-[#a6bedb] bg-linear-to-r from-[#8e9db6] via-[#a6bedc] via-30% to-[#a6c2e0] shadow-[inset_0_1px_0_#c9d8e8]">
    <button type="button" aria-label="Start" className="w-[54px] flex items-center justify-center">
      <StartOrb />
    </button>
    <button type="button" aria-label="Internet Explorer" className="w-[67px] flex items-center justify-center pl-1">
      <ExplorerE />
    </button>
    <button type="button" aria-label="Firefox" className="w-[62px] flex items-center justify-center">
      <svg viewBox="0 0 48 48" className="w-8 h-8">
        <FirefoxArt />
      </svg>
    </button>
    <button type="button" aria-label="Windows Explorer" className="w-[60px] flex pr-[3px] rounded-xs border border-[#4c5c70] bg-[#c0d0e2]">
      <span className="flex-1 flex items-center justify-center border-r border-[#4c5c70] bg-linear-to-b from-[#f0f4f9] to-[#c9d6e6]">
        <LibrariesIcon className="w-8 h-8" />
      </span>
    </button>
    <button type="button" aria-label="Media Player" className="w-[62px] flex items-center justify-center">
      <MediaPlayerIcon />
    </button>
    <div className="ml-auto flex items-center bg-linear-to-r from-transparent to-[#8090a6] to-20% text-white">
      <button type="button" aria-label="Show hidden icons" className="ml-10 mr-[12px]">
        <svg viewBox="0 0 8 5" className="w-2 h-[5px]" fill="#fff">
          <path d="M0 5h8L4 0z" />
        </svg>
      </button>
      <button type="button" aria-label="Action Center" className="mr-[8px]"><FlagIcon /></button>
      <button type="button" aria-label="Network" className="mr-[8px]"><NetworkTray /></button>
      <button type="button" aria-label="Volume"><VolumeTray /></button>
      <button type="button" className="w-[76px] pl-[10px] pr-[6px] flex flex-col items-center leading-[17px] whitespace-nowrap">
        <span>6:51 PM</span>
        <span>3/13/2024</span>
      </button>
      <button type="button" aria-label="Show desktop" className="w-[15px] h-full border border-[#4f5e72] bg-linear-to-br from-[#a9b6c6] to-[#66768a]" />
    </div>
  </footer>
);

export default function App() {
  return (
    <div className="relative flex flex-col h-screen overflow-hidden text-[11px] leading-[15px] font-['Open_Sans','Noto_Sans',sans-serif]">
      <Wallpaper />
      <main className="relative flex-1 flex justify-between">
        <div className="flex flex-col w-[78px]">
          <DesktopItem icon={<ComputerLarge />} lines={['Computer']} />
          <DesktopItem icon={<FirefoxLarge />} lines={['Firefox']} />
          <DesktopItem icon={<SupermiumIcon />} lines={['Supermium']} />
          <DesktopItem icon={<VisualStudioIcon />} lines={['Microsoft', 'Visual Stud...']} />
          <DesktopItem icon={<DownloadManagerIcon />} lines={['Free', 'Downlo...']} className="mt-[104px]" />
        </div>
        <DesktopItem icon={<RecycleBinIcon />} lines={['Recycle Bin']} className="w-[100px] self-end" />

        <BackgroundWindow />
        <ExplorerWindow />
        <ContextMenu />

        {/* Mouse pointer */}
        <svg viewBox="0 0 13 20" className="absolute left-[491px] top-[349px] w-[13px] h-5 drop-shadow-[2px_2px_1px_rgba(0,0,0,0.35)]">
          <path d="M.5 1v15.500l3.500-3.300 2.500 5.600 2.500-1.100-2.500-5.400h5.200z" fill="#fff" stroke="#111" />
        </svg>
      </main>
      <Taskbar />
    </div>
  );
}
